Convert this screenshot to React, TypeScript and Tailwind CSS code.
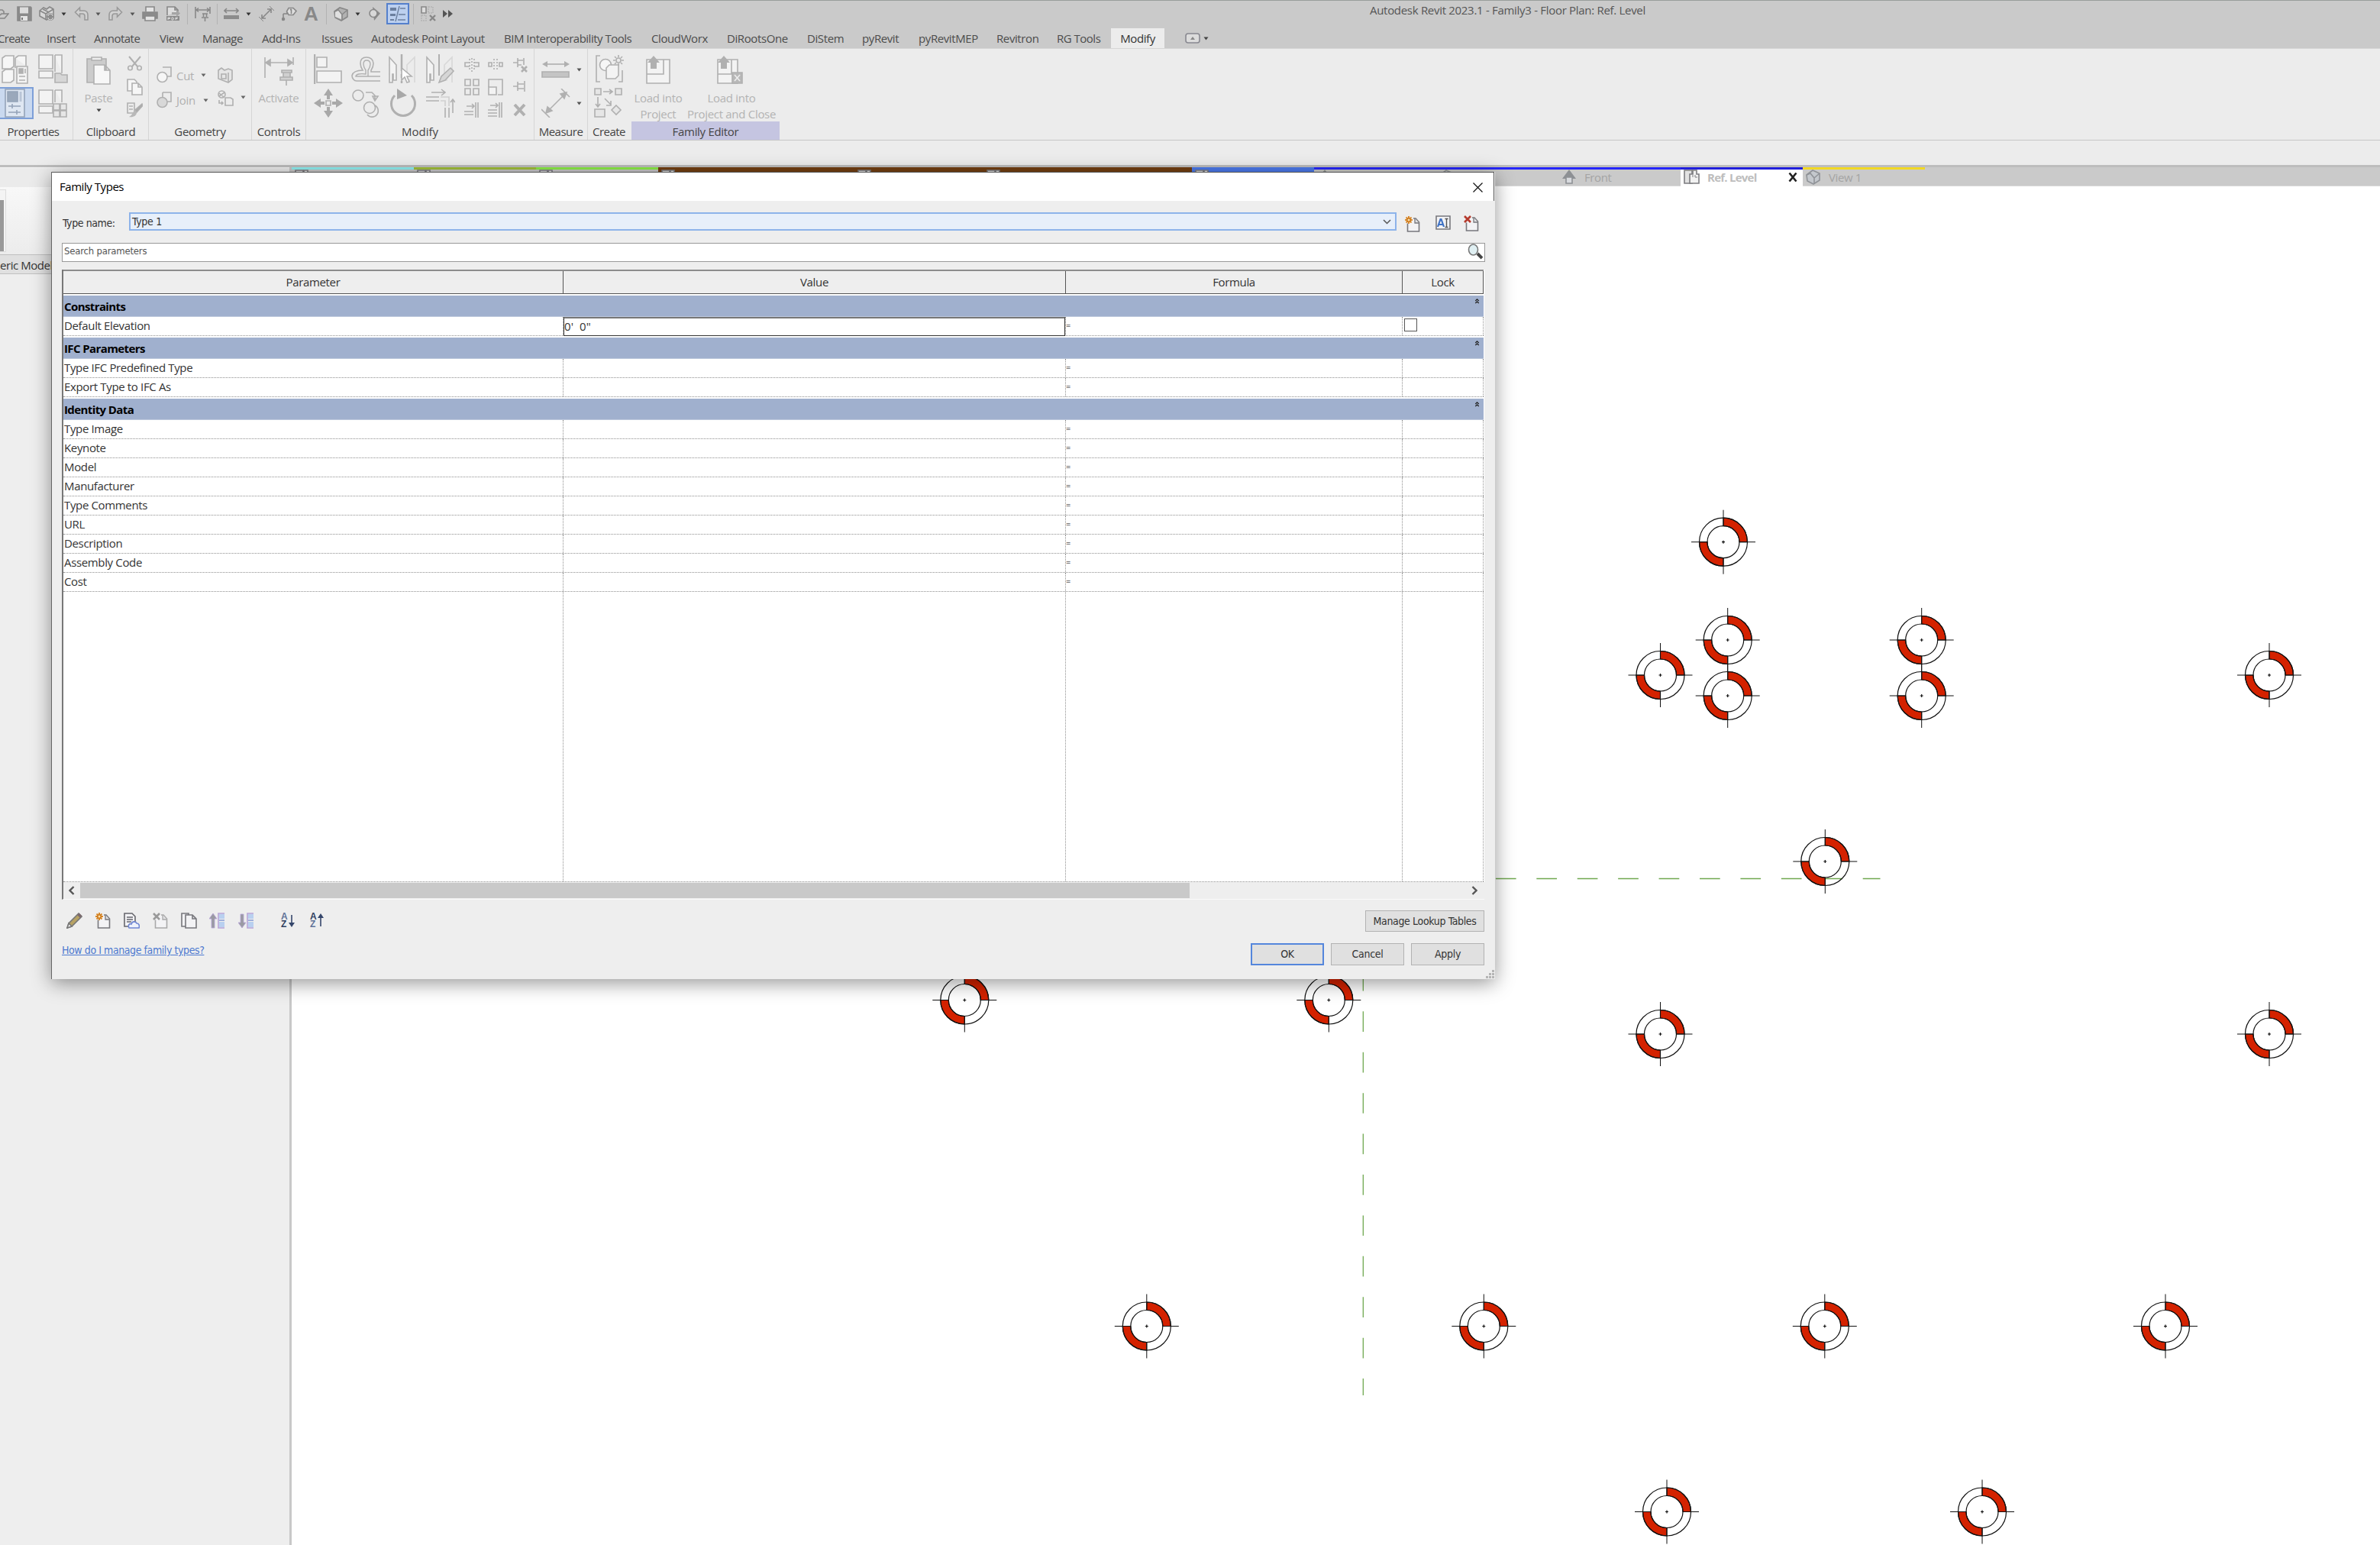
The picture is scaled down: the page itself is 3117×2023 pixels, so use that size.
import React from 'react';

type IcProps = {
  w: number;
  h: number;
  className?: string;
  children: React.ReactNode;
};

// grey line icon, drawn in its own pixel grid
const Ic: React.FC<IcProps> = ({ w, h, className = '', children }) => (
  <svg
    width={w}
    height={h}
    viewBox={`0 0 ${w} ${h}`}
    fill="none"
    stroke="currentColor"
    strokeWidth="1.6"
    className={`shrink-0 ${className}`}
  >
    {children}
  </svg>
);

const Caret: React.FC<{ className?: string }> = ({ className = '' }) => (
  <svg width="7" height="5" viewBox="0 0 7 5" className={`shrink-0 ${className}`}>
    <path d="M0.5 0.5h6L3.5 4.5z" fill="currentColor" />
  </svg>
);

const Sep: React.FC<{ className?: string }> = ({ className = '' }) => (
  <div className={`w-px h-[27px] shrink-0 bg-[#b2b2b2] ${className}`} />
);

const TABS = [
  { name: 'Create', cls: 'w-[39px] tracking-[-0.7px]' },
  { name: 'Insert', cls: 'w-[37px]' },
  { name: 'Annotate', cls: 'w-[61px] tracking-[-0.5px]' },
  { name: 'View', cls: 'w-[31px] tracking-[-0.5px]' },
  { name: 'Manage', cls: 'w-[53px] tracking-[-0.5px]' },
  { name: 'Add-Ins', cls: 'w-[53px]' },
  { name: 'Issues', cls: 'w-[40px]' },
  { name: 'Autodesk Point Layout', cls: 'w-[149px]' },
  { name: 'BIM Interoperability Tools', cls: 'w-[168px] tracking-[-0.5px]' },
  { name: 'CloudWorx', cls: 'w-[74px]' },
  { name: 'DiRootsOne', cls: 'w-[80px]' },
  { name: 'DiStem', cls: 'w-[47px]' },
  { name: 'pyRevit', cls: 'w-[49px]' },
  { name: 'pyRevitMEP', cls: 'w-[77px]' },
  { name: 'Revitron', cls: 'w-[54px]' },
  { name: 'RG Tools', cls: 'w-[58px] tracking-[-0.5px]' },
];

const QuickAccess: React.FC = () => (
  <div className="flex items-center h-[34px] w-[600px] text-[#888888]">
    <Ic w={12} h={20}>
      <path d="M0 5h3l2 2v3M0 16h6l5-6H2L0 12" />
    </Ic>
    <Ic w={20} h={20} className="ml-[10px]">
      <path d="M1 1h17l1 1v17H1z" fill="#8a8a8a" />
      <path d="M4 1.500h11v8H4z" fill="#dcdcdc" stroke="none" />
      <path d="M5 13h9v6H5z" fill="#e4e4e4" stroke="none" />
      <path d="M6 15h2v3H6z" fill="#777" stroke="none" />
    </Ic>
    <Ic w={21} h={20} className="ml-[9px]">
      <path d="M1 6l5-4 4 2 4-3 5 3v8l-9 6-9-5z" fill="#d8d8d8" />
      <path d="M1 6l8 4 10-6M9 10v8M5 4l8 4" />
      <circle cx="15" cy="14" r="5" fill="#8c8c8c" stroke="none" />
      <path d="M12 13a3 3 0 0 1 6 0M18 15a3 3 0 0 1-6 0" stroke="#d8d8d8" strokeWidth="1" />
    </Ic>
    <Caret className="ml-[8px] text-[#333]" />
    <Ic w={19} h={20} className="ml-[10px] text-[#999]">
      <path d="M1.500 8l6-6v4h5c4 0 5.500 3 5.500 5.500V18h-4v-5c0-2-1-3-3-3h-3.500v4z" fill="#d2d2d2" />
    </Ic>
    <Caret className="ml-[9px] text-[#555]" />
    <Ic w={19} h={20} className="ml-[10px] text-[#999]">
      <path d="M17.500 8l-6-6v4h-5C2.500 6 1 9 1 11.500V18h4v-5c0-2 1-3 3-3h3.500v4z" fill="#d2d2d2" />
    </Ic>
    <Caret className="ml-[9px] text-[#555]" />
    <Ic w={21} h={20} className="ml-[9px]">
      <path d="M5 7V1h11v6" fill="#e4e4e4" />
      <path d="M1 8h19v8H1z" fill="#8c8c8c" />
      <path d="M4 13h13v6H4z" fill="#e4e4e4" />
    </Ic>
    <Ic w={20} h={20} className="ml-[10px]">
      <path d="M2 12V1h10l4 4v2M12 1v4h4" fill="#dedede" />
      <path d="M8 8h6V5l5 4.500-5 4.500v-3H8z" fill="#a5a5a5" stroke="none" />
      <path d="M1 13h17v6H1z" fill="#8a8a8a" stroke="none" />
      <path d="M3 18v-3h2.500v1.500H3M8 15v3h1.500l1-1v-1l-1-1zM13 18v-3h3M13 16.500h2.500" stroke="#e6e6e6" strokeWidth="0.900" />
    </Ic>
    <Sep className="ml-[8px]" />
    <Ic w={21} h={20} className="ml-[9px]">
      <path d="M1 1v15M20 1v9M2 5h17M5 2.500L2 5l3 2.500M16 2.500L19 5l-3 2.500" />
      <path d="M10 10h7M11.500 10v4M15.500 10v4M9 15h9M13.500 15v5" />
    </Ic>
    <Sep className="ml-[8px]" />
    <Ic w={20} h={20} className="ml-[8px]">
      <path d="M1 6h18M4 3L1 6l3 3M16 3l3 3-3 3" />
      <path d="M0 12h20v5H0z" fill="#8c8c8c" stroke="none" />
    </Ic>
    <Caret className="ml-[9px] text-[#333]" />
    <Ic w={20} h={20} className="ml-[10px]">
      <path d="M4 16L16 4M4 11v5h5M11 4h5v5" />
      <path d="M0 14l6 6M14 0l6 6" strokeWidth="1" />
    </Ic>
    <Ic w={20} h={20} className="ml-[10px]">
      <path d="M9 2.500h6l4 4-4 5H9L6.500 7z" fill="#dedede" />
      <path d="M12.500 4v6M11 5l1.500-1M7 8v2H2" />
      <path d="M2 10v5" />
      <circle cx="2" cy="17" r="1.500" fill="#888" />
    </Ic>
    <div className="ml-[9px] w-[18px] text-center text-[26px] leading-[24px] font-bold font-['Liberation_Sans',sans-serif]">A</div>
    <Sep className="ml-[11px]" />
    <Ic w={20} h={20} className="ml-[9px]">
      <path d="M1 7l7-5 10 3v9l-8 5-8-4z" fill="#b2b2b2" />
      <path d="M1 7l5-2 5 6v8M11 11l7-6M4 11v4" />
      <path d="M2 8l4-2 4 5v6l-8-3z" fill="#e0e0e0" stroke="none" />
    </Ic>
    <Caret className="ml-[8px] text-[#333]" />
    <Ic w={17} h={20} className="ml-[10px]">
      <path d="M6 1l10 8.500L8 19z" fill="#8a8a8a" stroke="none" />
      <circle cx="7" cy="9.500" r="5" fill="#d8d8d8" />
    </Ic>
    <div className="ml-[7px] w-[30px] h-[28px] shrink-0 bg-[#bcd0ef] border-2 border-[#5580cc] flex items-center justify-center">
      <Ic w={22} h={22} className="text-[#6b7f9e]">
        <path d="M1 3h8v4H1zM1 11h7v3H1zM1 18h5v2H1z" fill="#6b7f9e" stroke="none" />
        <path d="M14 4h7M12 12h9M11 19h10M13 1L8 21" strokeWidth="1.400" />
      </Ic>
    </div>
    <Sep className="ml-[5px]" />
    <Ic w={20} h={20} className="ml-[9px]">
      <path d="M1 1h6v8H1z" fill="#dedede" />
      <path d="M10 1h6v8h-6zM1 12h6v7H1z" stroke="#b4b4b4" strokeDasharray="2 1" />
      <path d="M12 12l7 7M19 12l-7 7" strokeWidth="2.400" />
    </Ic>
    <svg width="13" height="12" viewBox="0 0 13 12" className="ml-[9px] shrink-0">
      <path d="M0 1l6 5-6 5zM7 1l6 5-6 5z" fill="#555" />
    </svg>
  </div>
);

const Panel: React.FC<{ label: string; className: string; labelClass?: string; children: React.ReactNode }> = ({
  label,
  className,
  labelClass = '',
  children,
}) => (
  <div className={`flex flex-col shrink-0 h-[119px] text-[#b0b0b0] ${className}`}>
    <div className="h-[95px] flex items-start">{children}</div>
    <div className={`h-[24px] leading-[26px] text-center text-[#444] text-[15px] whitespace-nowrap ${labelClass}`}>{label}</div>
  </div>
);

const Ribbon: React.FC = () => (
  <div className="flex h-[119px] bg-[#ececec] tracking-[-0.3px]">
    <Panel label="Properties" className="w-[96px] border-r border-[#d6d6d6]" labelClass="pr-[8px] tracking-[-0.45px]">
      <div className="w-[43px] flex flex-col">
        <Ic w={38} h={38} className="ml-[1px] mt-[8px]">
          <path d="M2 4l4-3h11v14l-4 3H2zM19 4l4-3h10v13M19 4v13M2 22l4-3h11v14l-4 3H2z" fill="#f6f6f6" />
          <path d="M21 15h14v22H21z" fill="#f3f3f3" />
          <path d="M24 18h5v6h-5z" fill="#b0b0b0" />
          <path d="M32 18v6M24 28h8M24 33h8" />
        </Ic>
        <div className="mt-[4px] w-[44px] h-[42px] bg-[#cad9ef] border-2 border-l-0 border-[#7d9fd8] flex items-center pl-[6px]">
          <Ic w={27} h={38} className="text-[#94a3b8]">
            <path d="M1 1h25v36H1z" fill="#dfe7f2" />
            <path d="M4 4h13v13H4z" fill="#9aa8bb" />
            <path d="M21 4v13" strokeWidth="3" stroke="#b9c5d6" />
            <path d="M5 23h16M5 31h16M10 20v6M16 28v6" />
          </Ic>
        </div>
      </div>
      <div className="ml-[7px] flex flex-col">
        <Ic w={39} h={38} className="mt-[7px]">
          <path d="M1 1h18v18H1zM22 1h9v24M1 22h18v9H1zM22 1v22" fill="#f3f3f3" />
          <path d="M22 25h7l2 2h7v10H22z" fill="#d6d6d6" />
        </Ic>
        <Ic w={39} h={38} className="mt-[8px]">
          <path d="M1 1h18v18H1zM22 1h9v16M1 22h18v9H1zM22 1v16" fill="#f3f3f3" />
          <path d="M20 19h8v8h-8zM29 19h8v8h-8zM20 28h8v8h-8zM29 28h8v8h-8z" fill="#e6e6e6" />
        </Ic>
      </div>
    </Panel>

    <Panel label="Clipboard" className="w-[99px] border-r border-[#d6d6d6]" labelClass="tracking-[-0.4px]">
      <div className="ml-[16px] w-[34px] flex flex-col items-center">
        <Ic w={33} h={38} className="mt-[9px]">
          <path d="M1 4h25v31H1z" fill="#cccccc" />
          <path d="M7 6V2h13v4z" fill="#ececec" />
          <path d="M10 12h14l7 7v18H10zM24 12v7h7" fill="#f7f7f7" />
        </Ic>
        <span className="mt-[7px] text-[15px] leading-[20px] text-[#b3b3b3]">Paste</span>
        <Caret className="mt-[4px] text-[#444]" />
      </div>
      <div className="ml-[20px] flex flex-col">
        <Ic w={21} h={20} className="mt-[9px]">
          <path d="M3 1l11 13M18 1L7 14" strokeWidth="2" />
          <circle cx="4.500" cy="16" r="2.800" />
          <circle cx="16.500" cy="16" r="2.800" />
        </Ic>
        <Ic w={21} h={22} className="mt-[10px]">
          <path d="M1 1h9l3 3v12H1z" fill="#f6f6f6" />
          <path d="M7 6h8l5 5v10H7zM15 6v5h5" fill="#f6f6f6" />
        </Ic>
        <Ic w={21} h={20} className="mt-[9px]">
          <path d="M1 1h9v13H1zM3 5h5M3 9h5" />
          <path d="M20 2l-9 8 2 3 8-9z" fill="#aaa" />
          <path d="M11 11c-4 1-3 6-8 8 5 1 10-1 10-6z" fill="#b8b8b8" stroke="none" />
        </Ic>
      </div>
    </Panel>

    <Panel label="Geometry" className="w-[135px] border-r border-[#d6d6d6]">
      <div className="ml-[10px] mt-[20px] flex flex-col gap-[9px] w-[80px]">
        <div className="flex items-center h-[30px]">
          <Ic w={21} h={22} className="mt-[-2px]">
            <path d="M8 1h11v12H12" />
            <circle cx="7.500" cy="14" r="6.500" fill="#f6f6f6" />
          </Ic>
          <span className="ml-[5px] w-[24px] text-[15px]">Cut</span>
          <Caret className="ml-[8px] mt-[-2px] text-[#666]" />
        </div>
        <div className="flex items-center h-[16px]">
          <Ic w={21} h={22}>
            <path d="M8 1h11v12H12" />
            <circle cx="7.500" cy="14" r="6.500" fill="#d8d8d8" />
            <path d="M8 1v7" />
          </Ic>
          <span className="ml-[5px] w-[28px] text-[15px]">Join</span>
          <Caret className="ml-[7px] text-[#666]" />
        </div>
      </div>
      <div className="flex flex-col">
        <Ic w={21} h={22} className="mt-[24px]">
          <path d="M1 4l4-3 4 3 5-2 5 2v12l-5 4-13-5z" fill="#e6e6e6" />
          <path d="M5 9h6v6H5zM14 7v13" />
        </Ic>
        <div className="flex items-center mt-[8px]">
          <Ic w={21} h={21}>
            <circle cx="5.500" cy="5.500" r="4.500" />
            <path d="M2 8l7-5M2 4l6 5M10 10h7l3 2v8H10zM2 13v4h5M5 15l2 2-2 2" />
          </Ic>
          <Caret className="ml-[9px] mt-[-2px] text-[#666]" />
        </div>
      </div>
    </Panel>

    <Panel label="Controls" className="w-[71px] border-r border-[#d6d6d6]">
      <div className="w-full flex flex-col items-center">
        <Ic w={39} h={38} className="mt-[10px]">
          <path d="M1 1v27M38 1v10M3 8h33" />
          <path d="M8 4v8L2 8zM31 4v8l6-4z" fill="#b0b0b0" />
          <path d="M23 18h13v3H23zM25 21h9v6h-9zM21 27h16v4H21z" fill="#d0d0d0" />
          <path d="M29 31v7" />
        </Ic>
        <span className="mt-[6px] text-[15px] leading-[20px] text-[#b3b3b3]">Activate</span>
      </div>
    </Panel>

    <Panel label="Modify" className="w-[299px] border-r border-[#d6d6d6]" labelClass="tracking-normal">
      <div className="ml-[10px] grid grid-cols-[49px_49px_49px_49px] gap-y-[7px] mt-[7px]">
        <Ic w={38} h={39}>
          <path d="M1 0v39" strokeWidth="2.500" />
          <path d="M4 4h13v13H4zM4 22h32v15H4z" fill="#f3f3f3" />
        </Ic>
        {/* offset */}
        <Ic w={38} h={39}>
          <path d="M38 23H26v-2c2-3 3-6 3-9 0-5-4-8-9-8s-8 3-8 8c0 3 1 6 3 9-8 0-13 3-14 7 0 4 3 7 6 7h31" />
          <path d="M38 29H22v-8c2-3 3-5 3-8 0-3-2-5-5-5s-4 2-4 5c0 3 1 5 3 8v5c-7-1-13 0-13 3h16" strokeWidth="1.400" />
        </Ic>
        <Ic w={38} h={39}>
          <path d="M1 37V4l9 10v20H6v-8H5v11z" fill="#f3f3f3" />
          <path d="M17 0v22M17 26v5M17 35v3" strokeWidth="2.500" />
          <path d="M34 37V4l-10 10v20h4" stroke="#d8d8d8" />
          <path d="M17 18v16l4-4 3 7 3-1-3-7h6z" fill="#fff" />
        </Ic>
        <Ic w={38} h={39}>
          <path d="M1 37V4l9 10v20H6v-8H5v11z" fill="#f3f3f3" />
          <path d="M17 0v28" strokeWidth="2" />
          <path d="M34 37V4l-10 10v20h4" stroke="#d8d8d8" />
          <path d="M17 37l3-8 12-11 4 4-11 12z" fill="#d6d6d6" />
        </Ic>
        <Ic w={38} h={38} className="mt-[-1px]">
          <path d="M19 0l6 9h-4v5h-4V9h-4zM19 38l6-9h-4v-5h-4v5h-4zM0 19l9-6v4h5v4H9v4zM38 19l-9-6v4h-5v4h5v4z" fill="#a8a8a8" stroke="none" />
          <path d="M16 16h6v6h-6z" />
        </Ic>
        <Ic w={38} h={38} className="mt-[-1px]">
          <circle cx="9" cy="9" r="7" />
          <path d="M19 5h8l4 4v5M28 10h7l-4 6z" />
          <circle cx="24" cy="25" r="7.500" fill="#ececec" />
          <path d="M31 22a8 8 0 1 1-10 12" />
        </Ic>
        <Ic w={38} h={38} className="mt-[-1px]">
          <path d="M8 9A15.500 15.500 0 1 0 30 9" strokeWidth="3" />
          <path d="M11 0v14l13-5z" fill="#a8a8a8" stroke="none" />
        </Ic>
        <Ic w={38} h={38} className="mt-[-1px]">
          <path d="M7 5h18M20 1l5 4-5 4M0 11h17M0 16h17M35 15v17M32 18l3-4 3 4" />
          <path d="M19 11h11v12M19 16h6v7" stroke="#cfcfcf" />
          <path d="M25 25v13M30 25v13" />
        </Ic>
      </div>
      <div className="ml-[1px] mt-[11px] grid grid-cols-[31px_33px_22px] grid-rows-[28px_31px_20px]">
        <Ic w={20} h={20}>
          <path d="M7 7H1v5h6M13 7h6v5h-6" />
          <path d="M7 2v16M13 2v16M10 1v18" strokeDasharray="2 2" />
        </Ic>
        <Ic w={20} h={20}>
          <path d="M5 7H1v5h4zM19 7h-4v5h4z" />
          <path d="M8 2v16M12 2v16" strokeDasharray="2 2" />
        </Ic>
        <Ic w={20} h={20}>
          <path d="M0 7h6M6 1v12M6 4h7M6 10h5M14 1v9" />
          <path d="M11 12l7 7M18 12l-7 7" strokeWidth="2.600" />
        </Ic>
        <Ic w={21} h={22}>
          <path d="M1 1h7v8H1zM12 1h7v8h-7zM1 13h7v8H1zM12 13h7v8h-7z" />
        </Ic>
        <Ic w={21} h={22}>
          <path d="M1 11V1h18v20h-6" />
          <path d="M1 11h10v10H1z" fill="#f3f3f3" />
        </Ic>
        <Ic w={21} h={20}>
          <path d="M0 10h6M6 4v12M6 7h8M6 13h8M15 3v14" />
        </Ic>
        <Ic w={20} h={20}>
          <path d="M3 5h10M10 2l3 3-3 3M0 12h12M0 16h12M15 0v20M18 0v20" />
        </Ic>
        <Ic w={20} h={20}>
          <path d="M3 4h10M10 1l3 3-3 3M0 10h12M0 14h12M0 18h12M15 0v20M18 0v20" />
        </Ic>
        <Ic w={18} h={20}>
          <path d="M2 3l13 14M15 3L2 17" strokeWidth="4" />
        </Ic>
      </div>
    </Panel>

    <Panel label="Measure" className="w-[70px] border-r border-[#d6d6d6]" labelClass="tracking-[-0.5px]">
      <div className="ml-[9px] mt-[14px] flex flex-col gap-[12px]">
        <div className="flex items-center">
          <Ic w={38} h={26}>
            <path d="M3 6h32" />
            <path d="M8 2v8L1 6zM30 2v8l7-4z" fill="#b0b0b0" stroke="none" />
            <path d="M1 16h35v7H1z" fill="#c4c4c4" />
          </Ic>
          <Caret className="ml-[8px] text-[#555]" />
        </div>
        <div className="flex items-center">
          <Ic w={38} h={38}>
            <path d="M7 31L32 6M0 27l11 11M26 0l11 11" />
            <path d="M6 32l2-8 6 5zM33 5l-8 2 5 6z" fill="#b0b0b0" />
          </Ic>
          <Caret className="ml-[8px] text-[#555]" />
        </div>
      </div>
    </Panel>

    <Panel label="Create" className="w-[57px]" labelClass="pr-[2px] tracking-[-0.5px]">
      <div className="ml-[9px] flex flex-col">
        <Ic w={38} h={38} className="mt-[7px]">
          <path d="M7 2H2v34h5M31 36h5V21" />
          <circle cx="14" cy="14" r="7.500" fill="#f6f6f6" />
          <path d="M15 18l4-4h12v14l-4 4H15z" fill="#f3f3f3" />
          <circle cx="31" cy="8" r="3" />
          <path d="M31 1v3M31 12v3M24 8h3M35 8h3M26 3l2 2M34 11l2 2M36 3l-2 2M28 11l-2 2" />
        </Ic>
        <Ic w={38} h={39} className="mt-[6px] ml-[-1px]">
          <path d="M1 1h8v8H1zM28 1h8v8h-8zM1 28h13v10H1zM29 23l6 6-6 6-6-6z" fill="#e6e6e6" />
          <path d="M12 5h11M20 2l4 3-4 3M5 12v12M2 21l3 4 3-4M14 14l8 8M22 17v6h-6" />
        </Ic>
      </div>
    </Panel>

    <Panel label="Family Editor" className="w-[194px]" labelClass="bg-[#c5c5e1]">
      <div className="ml-[3px] mt-[8px] w-[64px] flex flex-col items-center">
        <Ic w={33} h={38}>
          <path d="M1 6h30v31H1zM23 6v19H1M15 25h-14" fill="#f3f3f3" />
          <path d="M10 1l8 9h-4v8H6v-8H2z" fill="#b0b0b0" stroke="none" />
        </Ic>
        <span className="mt-[8px] text-[15px] leading-[21px] text-center text-[#b3b3b3] whitespace-nowrap">
          Load into
          <br />
          Project
        </span>
      </div>
      <div className="ml-[7px] mt-[8px] w-[114px] flex flex-col items-center">
        <Ic w={38} h={38}>
          <path d="M1 6h26v31H1zM19 6v19H1" fill="#f3f3f3" />
          <path d="M9 1l8 9h-4v8H5v-8H1z" fill="#b0b0b0" stroke="none" />
          <path d="M20 23h13v14H20z" fill="#b8b8b8" />
          <path d="M23 26l7 8M30 26l-7 8" stroke="#eee" />
        </Ic>
        <span className="mt-[8px] text-[15px] leading-[21px] text-center text-[#b3b3b3] whitespace-nowrap">
          Load into
          <br />
          Project and Close
        </span>
      </div>
    </Panel>
  </div>
);

const SheetGlyph = () => (
  <Ic w={21} h={20} className="text-[#7c7c80]">
    <path d="M1 1h10v17H1z" fill="#e2e2e2" />
    <path d="M8 6h4V1h5v5h3v12H8z" fill="#f2f2f2" />
    <path d="M12 10V7M15 7v3h3" strokeWidth="1" />
  </Ic>
);

const ElevationGlyph = () => (
  <Ic w={20} h={20} className="text-[#8d9094]">
    <path d="M10 0l9 12H1z" fill="#8d9094" stroke="none" />
    <path d="M6 10h8v8H6z" fill="#d8dade" />
  </Ic>
);

const CubeGlyph = () => (
  <Ic w={20} h={20} className="text-[#909398]">
    <path d="M1 7l8-6 9 4v9l-8 5-8-4z" fill="#c4c8cd" />
    <path d="M1 7l5-2 5 6v8M11 11l7-6" />
  </Ic>
);

const OPEN_VIEWS = [
  { cls: 'w-[160px] border-[#8ff0f2]', icon: <SheetGlyph /> },
  { cls: 'w-[160px] border-[#a0bf38]', icon: <SheetGlyph /> },
  { cls: 'w-[160px] border-[#8cee46]', icon: <SheetGlyph /> },
  { cls: 'w-[257px] border-[#733f12] bg-[#733f12]', icon: <SheetGlyph /> },
  { cls: 'w-[169px] border-[#733f12] bg-[#733f12]', icon: <SheetGlyph /> },
  { cls: 'w-[273px] border-[#733f12] bg-[#733f12]', icon: <SheetGlyph /> },
  { cls: 'w-[160px] border-[#4b79ec] bg-[#4b79ec]', icon: <SheetGlyph /> },
  { cls: 'w-[160px] border-[#2727fb]', icon: <ElevationGlyph /> },
  { cls: 'w-[160px] border-[#2727fb]', icon: <CubeGlyph /> },
  { cls: 'w-[160px] border-[#2727fb]', icon: <ElevationGlyph />, name: 'Front' },
  { cls: 'w-[160px] border-[#211fdc] bg-white', icon: <SheetGlyph />, name: 'Ref. Level', active: true },
  { cls: 'w-[160px] border-[#f2d822]', icon: <CubeGlyph />, name: 'View 1' },
];

const ViewTabs: React.FC = () => (
  <div className="flex h-[25px] bg-[#cacaca] border-b border-[#d8d8d8]">
    {OPEN_VIEWS.map((view, i) => (
      <div key={i} className={`h-[25px] shrink-0 border-t-[3px] flex items-center pl-[4px] pr-[7px] pb-[3px] ${view.cls}`}>
        {view.icon}
        {view.name && (
          <span
            className={`ml-[10px] text-[15px] leading-[20px] ${view.active ? 'font-bold text-[#bdbdbd] tracking-[-0.75px]' : 'text-[#a4a4a4] tracking-[-0.4px]'}`}
          >
            {view.name}
          </span>
        )}
        {view.active && (
          <svg width="12" height="12" viewBox="0 0 12 12" className="ml-auto">
            <path d="M1.500 0.500l9 11M10.500 0.500l-9 11" stroke="#222" strokeWidth="2.600" />
          </svg>
        )}
      </div>
    ))}
  </div>
);

const TARGETS: [number, number][] = [
  [2257, 709.7],
  [2174.5, 884],
  [2262.7, 838],
  [2262.7, 911],
  [2516.7, 838],
  [2516.7, 911],
  [2972, 884],
  [2390.3, 1128],
  [1263.3, 1309.5],
  [1740.3, 1309.5],
  [2174.5, 1354],
  [2972, 1354],
  [1501.8, 1736.5],
  [1943.3, 1736.5],
  [2389.8, 1736.5],
  [2836, 1736.5],
  [2183, 1979.5],
  [2596, 1979.5],
];

const Target: React.FC<{ x: number; y: number }> = ({ x, y }) => (
  <g transform={`translate(${x} ${y})`} stroke="#111" strokeWidth="1.2" fill="none">
    <path d="M0-31.500A31.500 31.500 0 0 1 31.500 0H21A21 21 0 0 0 0-21z" fill="#d42200" />
    <path d="M0 31.500A31.500 31.500 0 0 1-31.500 0H-21A21 21 0 0 0 0 21z" fill="#d42200" />
    <circle r="31.500" />
    <circle r="21" />
    <path d="M0-42V-21M0 42V21M-42 0H-21M42 0H21" strokeWidth="1" />
    <path d="M-2 0H2M0-2V2" />
  </g>
);

const DrawingArea: React.FC = () => (
  <svg width="2735" height="1779" viewBox="382 244 2735 1779" className="block bg-white">
    <path d="M1958.900 1150.500H2462.500" stroke="#70a850" strokeWidth="1.300" strokeDasharray="26.700 26.720" />
    <path d="M1785.300 1270.900V1827" stroke="#70a850" strokeWidth="1.300" strokeDasharray="26.700 26.720" />
    {TARGETS.map(([x, y]) => (
      <Target key={`${x}-${y}`} x={x} y={y} />
    ))}
  </svg>
);

type Row = { name: string; value?: string; lock?: boolean };

const GROUPS: { title: string; rows: Row[] }[] = [
  { title: 'Constraints', rows: [{ name: 'Default Elevation', value: '0\'  0"', lock: true }] },
  { title: 'IFC Parameters', rows: [{ name: 'Type IFC Predefined Type' }, { name: 'Export Type to IFC As' }] },
  {
    title: 'Identity Data',
    rows: [
      { name: 'Type Image' },
      { name: 'Keynote' },
      { name: 'Model' },
      { name: 'Manufacturer' },
      { name: 'Type Comments' },
      { name: 'URL' },
      { name: 'Description' },
      { name: 'Assembly Code' },
      { name: 'Cost' },
    ],
  },
];

const ParameterTable: React.FC = () => (
  <div className="ml-[13px] mt-[10px] w-[1863px] h-[825px] flex flex-col bg-white border-l-2 border-[#777] border-b border-b-[#fafafa] text-[15px] tracking-[-0.35px] text-[#333]">
    <div className="flex h-[32px] w-[1860px] shrink-0 bg-[#eeeeee] border-t-2 border-t-[#8c8c8c] border-b border-b-[#555] text-center leading-[29px]">
      <div className="w-[655px] border-r border-[#555]">Parameter</div>
      <div className="w-[658px] border-r border-[#555]">Value</div>
      <div className="w-[441px] border-r border-[#555]">Formula</div>
      <div className="w-[106px] border-r border-[#555]">Lock</div>
    </div>
    {GROUPS.map(group => (
      <div key={group.title} className="w-[1860px] pt-[2px] shrink-0">
        <div className="flex justify-between h-[28px] bg-[#a0b0ce] border-b border-[#bdc8dc] pl-[1px] pr-[5px] text-black font-bold leading-[28px] tracking-[-0.6px]">
          {group.title}
          <svg width="7" height="8" viewBox="0 0 8 8" className="mt-[3px]" fill="none" stroke="#222" strokeWidth="1.500">
            <path d="M1.500 4L4 1.500 6.500 4M1.500 7.500L4 5l2.500 2.500" />
          </svg>
        </div>
        {group.rows.map(row => (
          <div key={row.name} className="flex h-[25px] leading-[22px] border-b border-dotted border-[#8f8f8f]">
            <div className="w-[655px] pl-[1px] border-r border-dotted border-[#8f8f8f]">{row.name}</div>
            <div className="w-[658px] border-r border-dotted border-[#8f8f8f]">
              {row.value && (
                <div className="h-[25px] w-[657px] leading-[20px] whitespace-pre border border-[#333] border-t-2 border-t-[#777] tracking-[0.1px]">{row.value}</div>
              )}
            </div>
            <div className="w-[441px] border-r border-dotted border-[#8f8f8f] text-[11px] leading-[22px] text-black">=</div>
            <div className="w-[106px] pl-[2px] pt-[2px] border-r border-dotted border-[#8f8f8f]">
              {row.lock && <div className="w-[17px] h-[17px] border border-[#555]" />}
            </div>
          </div>
        ))}
      </div>
    ))}
    <div className="flex grow w-[1860px] border-b border-dotted border-[#8f8f8f]">
      <div className="w-[655px] border-r border-dotted border-[#8f8f8f]" />
      <div className="w-[658px] border-r border-dotted border-[#8f8f8f]" />
      <div className="w-[441px] border-r border-dotted border-[#8f8f8f]" />
      <div className="w-[106px] border-r border-dotted border-[#8f8f8f]" />
    </div>
    <div className="flex h-[22px] shrink-0 bg-[#eeeeee] items-center pl-[7px] pr-[9px]">
      <svg width="8" height="12" viewBox="0 0 8 12" fill="none" stroke="#555" strokeWidth="2.400">
        <path d="M6.500 1L1.500 6l5 5" />
      </svg>
      <div className="ml-[7px] w-[1453px] h-[20px] bg-[#c9c9c9]" />
      <svg width="8" height="12" viewBox="0 0 8 12" fill="none" stroke="#555" strokeWidth="2.400" className="ml-auto">
        <path d="M1.500 1l5 5-5 5" />
      </svg>
    </div>
  </div>
);

const PageOutline: React.FC<{ faded?: boolean }> = ({ faded }) => (
  <>
    <path d="M3.500 9.500V20h15V8l-4.500-5h-3" fill="#f3f3f5" stroke={faded ? '#a9a9a9' : '#77777c'} strokeWidth="1.600" />
    <path d="M13 3v6h5.500" fill="#e2e2e4" stroke={faded ? '#a9a9a9' : '#77777c'} strokeWidth="1.300" />
  </>
);

const Sun = () => (
  <>
    <path d="M5 0v10M0 5h10M1.500 1.500l7 7M8.500 1.500l-7 7" stroke="#d98a2b" strokeWidth="2" />
    <circle cx="5" cy="5" r="2.300" fill="#f6dfae" stroke="#cf7a1c" />
  </>
);

const ToolIcons: React.FC = () => (
  <div className="flex h-[21px] mt-[17px] ml-[5px]">
    <Ic w={21} h={21}>
      <path d="M1 20l2-6L16 1l4 4L7 18z" fill="#b7a263" stroke="#777" />
      <path d="M1 20l2-6 4 4z" fill="#f2f2f2" stroke="#777" />
      <path d="M14 3l3-2 3 3-2 3z" fill="#7c6a6e" stroke="none" />
    </Ic>
    <Ic w={20} h={21} className="ml-[17px]">
      <PageOutline />
      <Sun />
    </Ic>
    <Ic w={21} h={21} className="ml-[17px]">
      <path d="M1 1h10l4 4v13H1z" fill="#f3f3f5" stroke="#66666c" />
      <path d="M4 6h8M4 9h8M4 12h6" stroke="#66666c" />
      <path d="M7 20c-2-4 1-6 3-5 1-4 6-4 7-1 3 0 4 3 3 6z" fill="#eef2fc" stroke="#6f86d2" />
    </Ic>
    <Ic w={20} h={21} className="ml-[17px]">
      <PageOutline faded />
      <path d="M1 1l8 8M9 1L1 9" stroke="#999" strokeWidth="2.600" />
    </Ic>
    <Ic w={21} h={21} className="ml-[17px]">
      <path d="M1 1h9v17H1z" fill="#f3f3f5" stroke="#77777c" />
      <path d="M6 3h9l5 5v12H6zM15 3v5h5" fill="#f3f3f5" stroke="#77777c" />
    </Ic>
    <Ic w={21} h={21} className="ml-[16px]">
      <path d="M5 1l5 7H7v12H3V8H0z" fill="#9a9aa2" stroke="#b5a3d8" strokeWidth="0.800" />
      <path d="M20 1h-8v19h8" stroke="#b5a3d8" />
      <path d="M13 2h7v6h-7zM13 12h7v7h-7z" fill="#b9d0f0" stroke="none" />
      <path d="M13 10h7" stroke="#8aa0d8" />
    </Ic>
    <Ic w={21} h={21} className="ml-[17px]">
      <path d="M5 20l5-7H7V2H3v11H0z" fill="#9a9aa2" stroke="#b5a3d8" strokeWidth="0.800" />
      <path d="M20 1h-8v19h8" stroke="#b5a3d8" />
      <path d="M13 2h7v6h-7zM13 12h7v7h-7z" fill="#b9d0f0" stroke="none" />
      <path d="M13 10h7" stroke="#8aa0d8" />
    </Ic>
    <div className="ml-[35px] flex">
      <div className="w-[10px] text-[12px] leading-[10px] font-bold tracking-normal font-['Liberation_Sans',sans-serif] text-[#5f7298]">
        A<br />
        <span className="text-[#2f3e5e]">Z</span>
      </div>
      <Ic w={8} h={21}>
        <path d="M4 3v14" stroke="#35466b" />
        <path d="M0 13h8l-4 6z" fill="#35466b" stroke="none" />
      </Ic>
    </div>
    <div className="ml-[20px] flex">
      <div className="w-[10px] text-[12px] leading-[10px] font-bold tracking-normal font-['Liberation_Sans',sans-serif] text-[#2f3e5e]">
        A<br />
        <span className="text-[#5f7298]">Z</span>
      </div>
      <Ic w={8} h={21}>
        <path d="M4 18V4" stroke="#35466b" />
        <path d="M0 7h8L4 1z" fill="#35466b" stroke="none" />
      </Ic>
    </div>
  </div>
);

const FamilyTypesDialog: React.FC = () => (
  <div className="absolute left-[67px] top-[225px] w-[1891px] h-[1057px] flex flex-col border-l border-[#666] bg-[#eeeeee] shadow-[0_5px_24px_rgba(0,0,0,0.42)]">
    <div className="flex items-center justify-between h-[38px] w-[1889px] bg-white border-t border-r border-[#555] pl-[10px] pr-[14px]">
      <span className="text-[15px] tracking-[-0.45px] text-black">Family Types</span>
      <svg width="13" height="13" viewBox="0 0 13 13" className="mt-[2px]">
        <path d="M0.500 0.500l12 12M12.500 0.500l-12 12" stroke="#111" strokeWidth="1.200" />
      </svg>
    </div>

    <div className="flex items-center mt-[15px] h-[24px] pl-[14px] font-['DejaVu_Sans_Condensed','Open_Sans',sans-serif]">
      <span className="w-[87px] shrink-0 text-[14px] pt-[4px] tracking-[-0.4px] text-[#333]">Type name:</span>
      <div className="flex items-center justify-between w-[1660px] h-[24px] shrink-0 bg-[#e7effa] border-2 border-[#8db3ea] pl-[2px] pr-[5px] text-[14px] tracking-[-0.3px] text-[#333]">
        Type 1
        <svg width="11" height="7" viewBox="0 0 11 7" fill="none" stroke="#555" strokeWidth="1.500">
          <path d="M1 1l4.500 4.500L10 1" />
        </svg>
      </div>
      <Ic w={20} h={21} className="ml-[11px] mt-[6px]">
        <PageOutline />
        <Sun />
      </Ic>
      <Ic w={20} h={20} className="ml-[20px] mt-[4px]">
        <path d="M1 1h18v17H1z" fill="#f3f3f5" stroke="#77777c" />
        <path d="M3 15L6.500 5h1L11 15M4.500 12h5" stroke="#3f72c4" strokeWidth="2.200" />
        <path d="M14.500 5v10M12.500 4.500h4M12.500 15.500h4" stroke="#555" strokeWidth="1.400" />
      </Ic>
      <Ic w={20} h={21} className="ml-[17px] mt-[5px]">
        <PageOutline />
        <path d="M1 1l8 8M9 1L1 9" stroke="#b53a2d" strokeWidth="2.600" />
      </Ic>
    </div>

    <div className="flex justify-between ml-[13px] mt-[16px] w-[1864px] h-[25px] shrink-0 bg-white border border-[#999] pl-[2px] pr-[2px]">
      <span className="text-[13px] leading-[20px] tracking-[-0.2px] text-[#555] font-['DejaVu_Sans_Condensed','Open_Sans',sans-serif]">Search parameters</span>
      <Ic w={20} h={21}>
        <path d="M13 13l6 6" stroke="#444" strokeWidth="4" />
        <ellipse cx="7.500" cy="8" rx="6" ry="7" fill="#e0f0f3" stroke="#777" />
      </Ic>
    </div>

    <ParameterTable />

    <div className="flex justify-between pl-[14px] pr-[14px] font-['DejaVu_Sans_Condensed','Open_Sans',sans-serif] text-[14px] text-[#333]">
      <div className="flex flex-col">
        <ToolIcons />
        <a className="mt-[18px] ml-[-1px] text-[14px] leading-[20px] tracking-[-0.42px] text-[#4d79d0] underline">How do I manage family types?</a>
      </div>
      <div className="flex flex-col items-end">
        <button className="mt-[14px] w-[156px] h-[28px] bg-[#e0e0e0] border border-[#b2b2b2] tracking-[-0.35px]">Manage Lookup Tables</button>
        <div className="flex gap-[9px] mt-[15px] tracking-[-0.3px]">
          <button className="w-[96px] h-[29px] bg-[#e0e0e0] border-2 border-[#5486dc]">OK</button>
          <button className="w-[96px] h-[29px] bg-[#e0e0e0] border border-[#b2b2b2]">Cancel</button>
          <button className="w-[96px] h-[29px] bg-[#e0e0e0] border border-[#b2b2b2]">Apply</button>
        </div>
      </div>
    </div>
    <svg width="11" height="11" viewBox="0 0 11 11" className="ml-auto mt-auto mr-[1px] mb-[1px]" fill="#b5b5b5">
      <path d="M0 8h3v3H0zM4 8h3v3H4zM8 8h3v3H8zM4 4h3v3H4zM8 4h3v3H8zM8 0h3v3H8z" />
    </svg>
  </div>
);

const Sidebar: React.FC = () => (
  <div className="w-[382px] h-[1804px] shrink-0 flex flex-col bg-[#eeeeee] border-r-[3px] border-[#c8c8c8]">
    <div className="h-[26px] bg-[#ebebeb] border-t border-[#f5f5f5]" />
    <div className="h-[88px] bg-linear-to-b from-[#f8f8f8] to-[#ececec] pt-[3px]">
      <div className="w-[8px] h-[82px] bg-[#f4f4f4] border border-l-0 border-[#dddddd] pt-[13px]">
        <div className="w-[5px] h-[67px] bg-[#999]" />
      </div>
    </div>
    <div className="h-[26px] bg-[#e0e0e0] border-y border-[#c0c0c0] text-[15px] leading-[26px] tracking-[-0.45px] text-[#333]">eric Model</div>
  </div>
);

const App: React.FC = () => {
  return (
    <div className="relative w-[3117px] h-[2023px] overflow-hidden flex flex-col bg-[#ececec] font-['Open_Sans','Noto_Sans',sans-serif]">
      <header className="h-[64px] bg-[#cacaca] border-t border-t-[#989e9b] border-b border-b-[#d6d6d6] flex flex-col">
        <div className="flex h-[36px]">
          <QuickAccess />
          <span className="ml-[1194px] pt-[1px] text-[15px] leading-[23px] tracking-[-0.3px] text-[#555] whitespace-nowrap">
            Autodesk Revit 2023.1 - Family3 - Floor Plan: Ref. Level
          </span>
        </div>
        <nav className="flex mt-[1px] -ml-[3px] h-[26px] text-[15px] leading-[27px] tracking-[-0.4px] text-[#4c4c4c] whitespace-nowrap">
          {TABS.map(tab => (
            <div key={tab.name} className={`shrink-0 mr-[25px] ${tab.cls}`}>
              {tab.name}
            </div>
          ))}
          <div className="w-[70px] h-[26px] -ml-[12px] text-center bg-[#ececec] text-[#333]">Modify</div>
          <div className="flex items-center">
            <Ic w={20} h={14} className="ml-[27px] text-[#888890]">
              <rect x="1" y="1" width="18" height="12" rx="3" fill="#dcdcdc" />
              <path d="M7 9h6l-3-4z" fill="#888" stroke="none" />
            </Ic>
            <Caret className="ml-[4px] text-[#444]" />
          </div>
        </nav>
      </header>
      <Ribbon />
      <div className="h-[36px] shrink-0 bg-[#ececec] border-t border-[#c6c6c6] border-b-[3px] border-b-[#bdbdbd]" />
      <div className="flex">
        <Sidebar />
        <main className="flex flex-col w-[2735px]">
          <ViewTabs />
          <DrawingArea />
        </main>
      </div>
      <FamilyTypesDialog />
    </div>
  );
};

export default App;
